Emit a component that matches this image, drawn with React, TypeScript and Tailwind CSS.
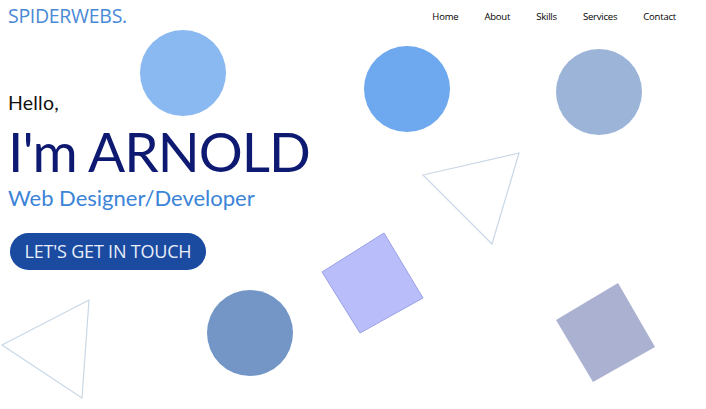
import React from "react"

const navLinks = ["Home", "About", "Skills", "Services", "Contact"]

const Shapes = () => {
    return (
        <svg className="absolute inset-0 pointer-events-none" width="706" height="409" viewBox="0 0 706 409">
            <circle cx="183" cy="73" r="43" fill="#8ab9f1" />
            <circle cx="407" cy="89" r="43" fill="#6ea8ee" />
            <circle cx="599" cy="92" r="43" fill="#9bb4d8" />
            <ellipse cx="250" cy="333" rx="43" ry="43" fill="#7396c6" />
            <polygon points="423,175 519,153 492,244" fill="none" stroke="#c9d8e6" strokeWidth="1.2" />
            <polygon points="2,345 89,300 82,398" fill="none" stroke="#c9d8e6" strokeWidth="1.2" />
            <polygon points="322,272 384,233 423,298 360,333" fill="#b9befb" stroke="#9aa0e6" strokeWidth="1" />
            <polygon points="556,320 618,283 655,347 593,382" fill="#abb1d1" />
        </svg>
    )
}

export default function App() {
    return (
        <div className="relative w-[706px] h-[409px] overflow-hidden bg-white" style={{ fontFamily: "'Open Sans', 'Noto Sans', sans-serif" }}>
            <Shapes />
            <div className="relative">
                <header className="flex justify-between items-start pl-2 pr-[30px] pt-[3px] h-[30px]">
                    <span className="text-[19.5px] leading-[26px] tracking-[-0.3px] text-[#4a89d5]">SPIDERWEBS.</span>
                    <nav className="flex gap-x-[26px] pt-[7px] text-[9.5px] text-black tracking-[-0.2px]">
                        {navLinks.map(l => <a key={l}>{l}</a>)}
                    </nav>
                </header>
                <div className="pl-2 pt-[60px] font-['Lato',sans-serif]">
                    <p className="text-[19.5px] leading-[26px] text-[#111] tracking-[0.2px]">Hello,</p>
                    <h1 className="mt-[3px] text-[55px] leading-[64px] text-[#0e1a72] tracking-[-1px]">I'm ARNOLD</h1>
                    <p className="mt-[1px] text-[22px] leading-[28px] text-[#3b84d7]">Web Designer/Developer</p>
                    <button className="mt-[21px] ml-[2px] w-[196px] h-[37px] rounded-full bg-[#1b4aa1] text-[18px] text-[#e8eefa] tracking-[-0.2px] font-['Open_Sans',sans-serif]">LET'S GET IN TOUCH</button>
                </div>
            </div>
        </div>
    )
}
